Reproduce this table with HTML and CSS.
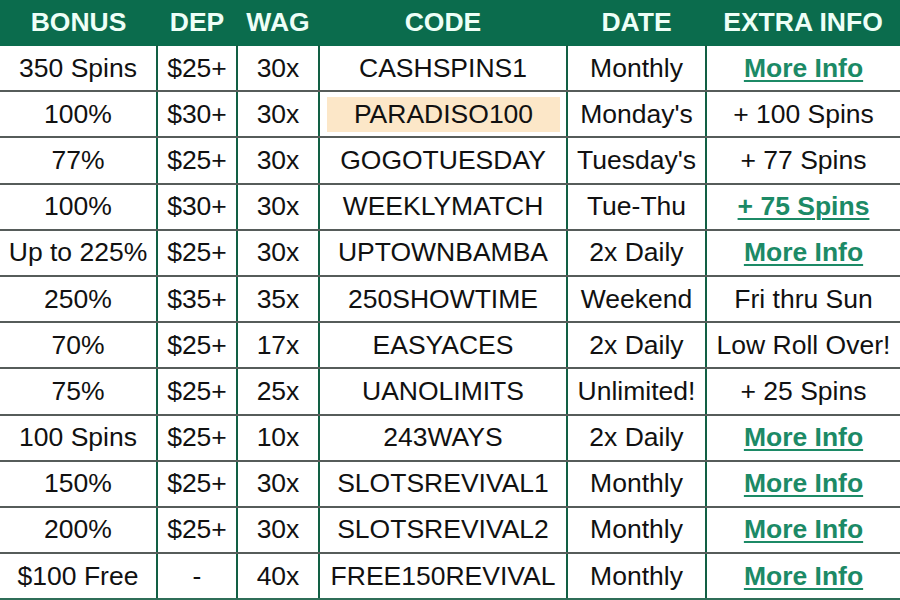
FILE: index.html
```html
<!DOCTYPE html>
<html>
<head>
<meta charset="utf-8">
<link rel="stylesheet" href="styles.css">
</head>
<body>
<table class="bonus-table">
  <colgroup>
    <col class="c-bonus"><col class="c-dep"><col class="c-wag"><col class="c-code"><col class="c-date"><col class="c-info">
  </colgroup>
  <thead>
    <tr><th>BONUS</th><th>DEP</th><th>WAG</th><th>CODE</th><th>DATE</th><th>EXTRA INFO</th></tr>
  </thead>
  <tbody>
    <tr><td>350 Spins</td><td>$25+</td><td>30x</td><td>CASHSPINS1</td><td>Monthly</td><td><a class="link" href="#">More Info</a></td></tr>
    <tr><td>100%</td><td>$30+</td><td>30x</td><td class="code-hl"><span class="hl">PARADISO100</span></td><td>Monday's</td><td>+ 100 Spins</td></tr>
    <tr><td>77%</td><td>$25+</td><td>30x</td><td>GOGOTUESDAY</td><td>Tuesday's</td><td>+ 77 Spins</td></tr>
    <tr><td>100%</td><td>$30+</td><td>30x</td><td>WEEKLYMATCH</td><td>Tue-Thu</td><td><a class="link" href="#">+ 75 Spins</a></td></tr>
    <tr><td>Up to 225%</td><td>$25+</td><td>30x</td><td>UPTOWNBAMBA</td><td>2x Daily</td><td><a class="link" href="#">More Info</a></td></tr>
    <tr><td>250%</td><td>$35+</td><td>35x</td><td>250SHOWTIME</td><td>Weekend</td><td>Fri thru Sun</td></tr>
    <tr><td>70%</td><td>$25+</td><td>17x</td><td>EASYACES</td><td>2x Daily</td><td>Low Roll Over!</td></tr>
    <tr><td>75%</td><td>$25+</td><td>25x</td><td>UANOLIMITS</td><td>Unlimited!</td><td>+ 25 Spins</td></tr>
    <tr><td>100 Spins</td><td>$25+</td><td>10x</td><td>243WAYS</td><td>2x Daily</td><td><a class="link" href="#">More Info</a></td></tr>
    <tr><td>150%</td><td>$25+</td><td>30x</td><td>SLOTSREVIVAL1</td><td>Monthly</td><td><a class="link" href="#">More Info</a></td></tr>
    <tr><td>200%</td><td>$25+</td><td>30x</td><td>SLOTSREVIVAL2</td><td>Monthly</td><td><a class="link" href="#">More Info</a></td></tr>
    <tr><td>$100 Free</td><td>-</td><td>40x</td><td>FREE150REVIVAL</td><td>Monthly</td><td><a class="link" href="#">More Info</a></td></tr>
  </tbody>
</table>
</body>
</html>
```
FILE: styles.css
```css
html, body {
  margin: 0;
  padding: 0;
  background: #ffffff;
}
body {
  width: 900px;
  height: 600px;
  overflow: hidden;
  font-family: "Liberation Sans", Arial, sans-serif;
}
.bonus-table {
  width: 900px;
  table-layout: fixed;
  border-collapse: collapse;
  font-size: 26.5px;
  color: #111111;
}
.c-bonus { width: 157px; }
.c-dep { width: 80px; }
.c-wag { width: 82px; }
.c-code { width: 248px; }
.c-date { width: 139px; }
.c-info { width: 194px; }

.bonus-table th {
  background: #0b6c4d;
  color: #eefff7;
  font-weight: bold;
  height: 45px;
  padding: 0;
  text-align: center;
  vertical-align: middle;
  border: none;
  border-bottom: 1px solid #0b6c4d;
}
.bonus-table td {
  height: 44.2px;
  padding: 0;
  text-align: center;
  vertical-align: middle;
  white-space: nowrap;
  border-left: 2px solid #125f44;
  border-right: 2px solid #125f44;
  border-bottom: 2px solid #565c5a;
}
.bonus-table td:first-child { border-left: none; }
.bonus-table td:last-child { border-right: none; }
.bonus-table tbody tr:last-child td { border-bottom: 2px solid #2f6e58; }

.bonus-table td.code-hl { padding: 0 6px 0 7px; }
.hl {
  display: block;
  background: #fce7c8;
  line-height: 35px;
}
.link {
  color: #1c8a66;
  font-weight: bold;
  text-decoration: underline;
  text-decoration-thickness: 2px;
  text-underline-offset: 3px;
}
```
